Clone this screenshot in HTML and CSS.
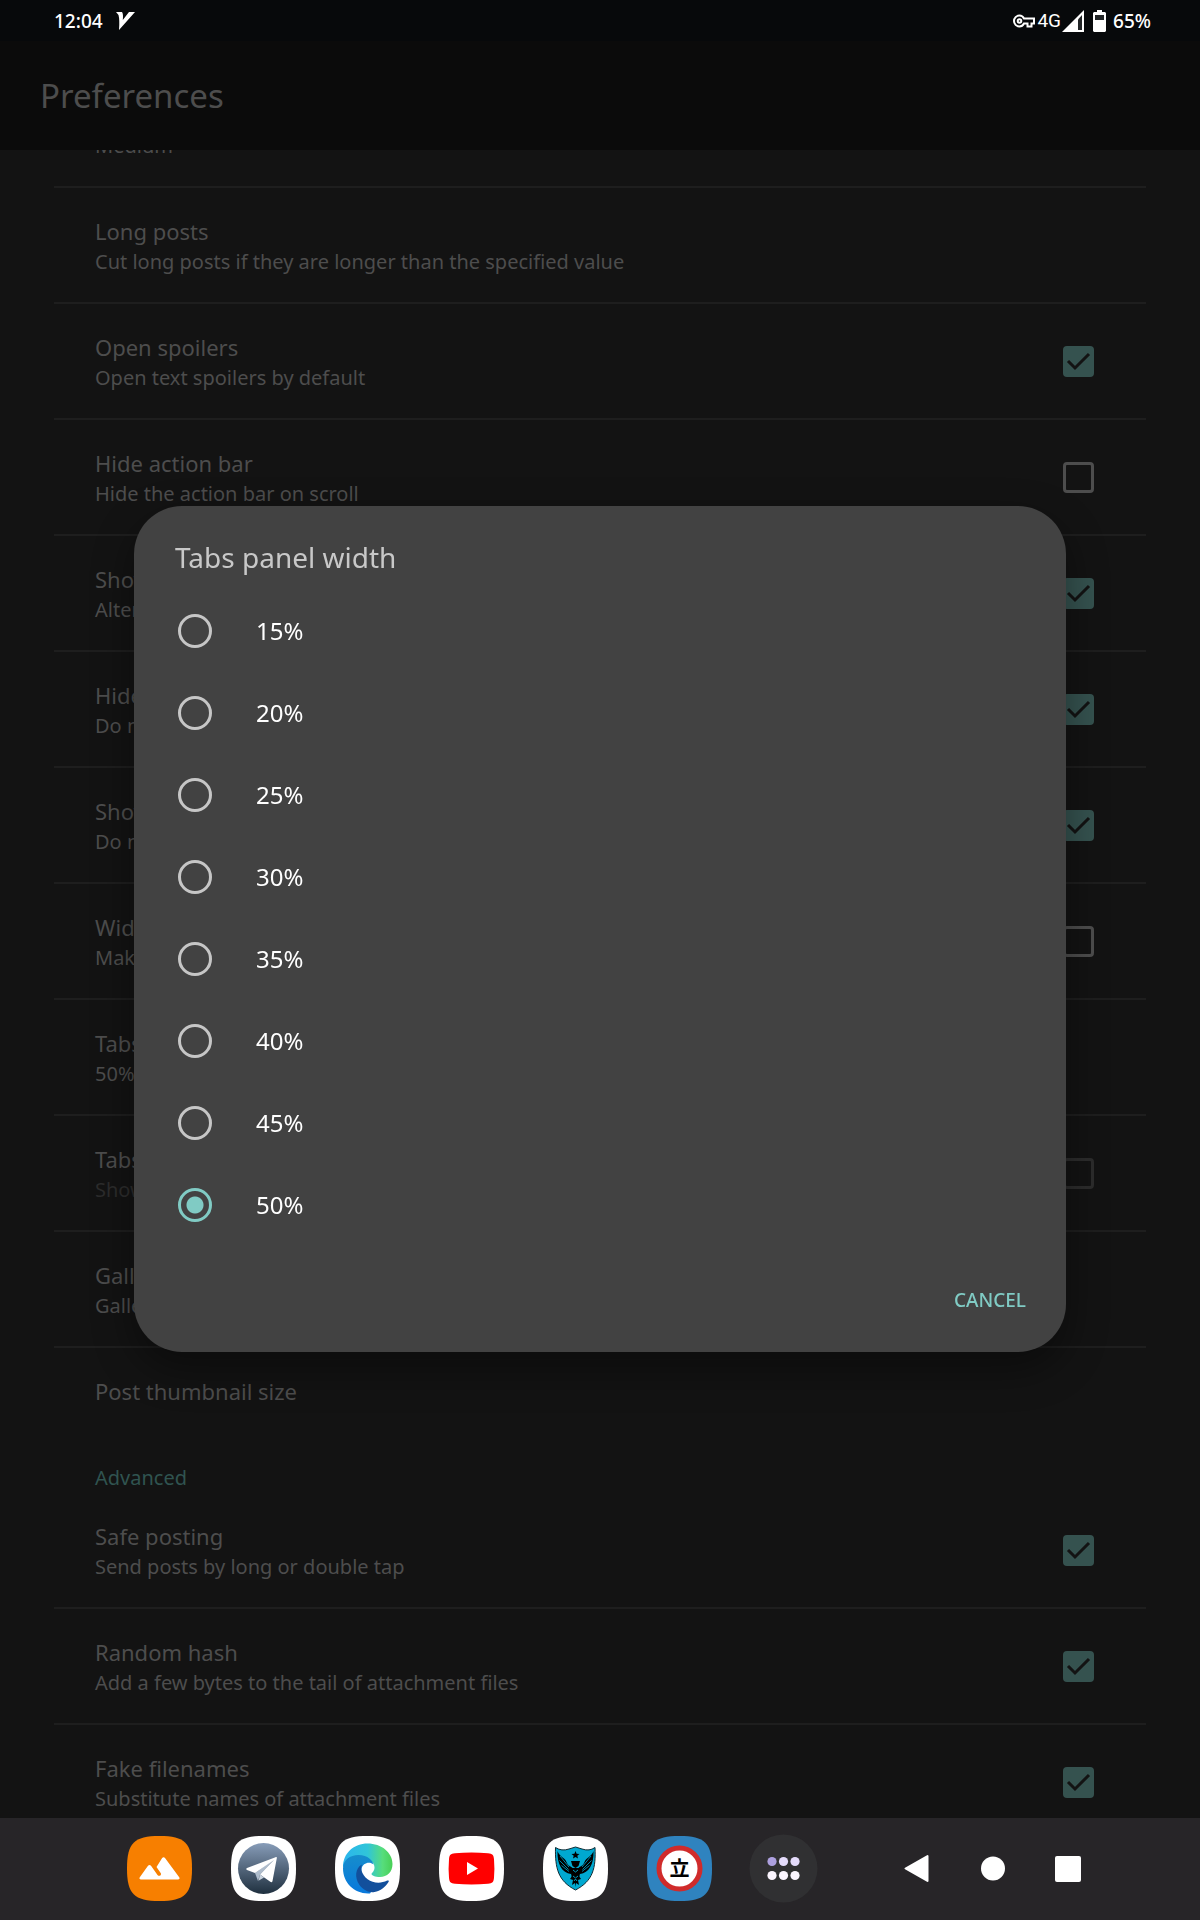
FILE: index.html
```html
<!DOCTYPE html>
<html lang="en">
  <head>
    <meta charset="UTF-8" />
    <meta name="viewport" content="width=device-width, initial-scale=1.0" />
    <title>Preferences</title>
    <link rel="stylesheet" href="styles.css">
  </head>
  <body>
    <div class="status-bar">
      <span class="clock">12:04</span>
      <svg class="notification" width="20" height="20" viewBox="0 0 20 20"><path d="M0 1h6q1.500 2 .8 8L13 1h6L3 19q.8-10-.5-15z" fill="#fff"/></svg>
      <div class="status-icons">
        <svg width="23" height="14" viewBox="0 0 23 14" fill="none" stroke="#fff" stroke-width="2"><path d="M11 4.500C10 2.500 8.500 1.500 6.500 1.500a5.500 5.500 0 0 0 0 11c2 0 3.500-1 4.500-3h3.500v3h4v-3H21v-5z"/><circle cx="6.500" cy="7" r="1.800"/></svg>
        <span class="network">4G</span>
        <svg width="22" height="22" viewBox="0 0 22 22"><path d="M0 22 22 0v22z" fill="#fff"/><path d="M16 9.500 20 5v15h-4z" fill="#222527"/></svg>
        <svg class="battery" width="13" height="22" viewBox="0 0 13 22"><path d="M4 0h5v2h3l1 1v18l-1 1H1l-1-1V3l1-1h3z" fill="#fff"/><path d="M2 5h9v5H2z" fill="#222527"/></svg>
        <span>65%</span>
      </div>
    </div>

    <header class="toolbar">
      <h1>Preferences</h1>
    </header>

    <main class="preferences">
      <div class="row">
        <div class="text">
          <div class="summary">Medium</div>
        </div>
      </div>
      <div class="row">
        <div class="text">
          <div class="title">Long posts</div>
          <div class="summary">Cut long posts if they are longer than the specified value</div>
        </div>
      </div>
      <label class="row">
        <span class="text">
          <span class="title">Open spoilers</span>
          <span class="summary">Open text spoilers by default</span>
        </span>
        <input type="checkbox" checked>
      </label>
      <label class="row">
        <span class="text">
          <span class="title">Hide action bar</span>
          <span class="summary">Hide the action bar on scroll</span>
        </span>
        <input type="checkbox">
      </label>
      <label class="row">
        <span class="text">
          <span class="title">Show</span>
          <span class="summary">Alternative</span>
        </span>
        <input type="checkbox" checked>
      </label>
      <label class="row">
        <span class="text">
          <span class="title">Hide</span>
          <span class="summary">Do not hide</span>
        </span>
        <input type="checkbox" checked>
      </label>
      <label class="row">
        <span class="text">
          <span class="title">Show</span>
          <span class="summary">Do not show</span>
        </span>
        <input type="checkbox" checked>
      </label>
      <label class="row">
        <span class="text">
          <span class="title">Wide</span>
          <span class="summary">Make wide</span>
        </span>
        <input type="checkbox">
      </label>
      <div class="row">
        <div class="text">
          <div class="title">Tabs</div>
          <div class="summary">50%</div>
        </div>
      </div>
      <label class="row disabled">
        <span class="text">
          <span class="title">Tabs</span>
          <span class="summary">Show</span>
        </span>
        <input type="checkbox" disabled>
      </label>
      <div class="row">
        <div class="text">
          <div class="title">Gallery</div>
          <div class="summary">Gallery</div>
        </div>
      </div>
      <div class="row last">
        <div class="text">
          <div class="title">Post thumbnail size</div>
        </div>
      </div>

      <h2>Advanced</h2>
      <label class="row">
        <span class="text">
          <span class="title">Safe posting</span>
          <span class="summary">Send posts by long or double tap</span>
        </span>
        <input type="checkbox" checked>
      </label>
      <label class="row">
        <span class="text">
          <span class="title">Random hash</span>
          <span class="summary">Add a few bytes to the tail of attachment files</span>
        </span>
        <input type="checkbox" checked>
      </label>
      <label class="row">
        <span class="text">
          <span class="title">Fake filenames</span>
          <span class="summary">Substitute names of attachment files</span>
        </span>
        <input type="checkbox" checked>
      </label>
    </main>

    <div class="overlay">
      <form class="dialog" role="dialog" aria-labelledby="dialog-title">
        <h2 id="dialog-title">Tabs panel width</h2>
        <label class="option"><input type="radio" name="width" value="15">15%</label>
        <label class="option"><input type="radio" name="width" value="20">20%</label>
        <label class="option"><input type="radio" name="width" value="25">25%</label>
        <label class="option"><input type="radio" name="width" value="30">30%</label>
        <label class="option"><input type="radio" name="width" value="35">35%</label>
        <label class="option"><input type="radio" name="width" value="40">40%</label>
        <label class="option"><input type="radio" name="width" value="45">45%</label>
        <label class="option"><input type="radio" name="width" value="50" checked>50%</label>
        <div class="actions">
          <button type="button" class="cancel">CANCEL</button>
        </div>
      </form>
    </div>

    <nav class="taskbar">
      <div class="apps">
        <button type="button" aria-label="Gallery">
          <svg viewBox="0 0 65 65">
            <defs><path id="tile" d="M32.500 0C58 0 65 7 65 32.500S58 65 32.500 65 0 58 0 32.500 7 0 32.500 0z"/></defs>
            <use href="#tile" fill="#f77f00"/>
            <path d="M14 43.500c-1.500 0-2-1-1.200-2.200l8.200-11.500c1-1.200 2-1.200 3 0l6.500 9.200c1.500 2 4.500.2 3.200-2l-4.200-6 5.500-8.700c1-1.500 2.200-1.500 3.200 0l14 19c.8 1.200.3 2.200-1.200 2.200z" fill="#fff"/>
          </svg>
        </button>
        <button type="button" aria-label="Telegram">
          <svg viewBox="0 0 65 65">
            <defs><linearGradient id="telegram" x1="0" y1="0" x2="0" y2="1"><stop offset="0" stop-color="#879cb8"/><stop offset="1" stop-color="#1f303f"/></linearGradient></defs>
            <use href="#tile" fill="#fff"/>
            <circle cx="32.500" cy="32.500" r="25.500" fill="url(#telegram)"/>
            <path d="M24 37 45 22 29 38.500 27 45z" fill="#aebccc"/>
            <path d="M16 32 44.500 21.200c1-.3 1.500.1 1.300 1.100L41.500 45c-.3 1.400-1.100 1.600-2.200.8L29 38.500 43 24 24 37l-8-3c-1-.6-1-1.400 0-2z" fill="#fff"/>
            <path d="m29 38.500 4 3-5.500 3.300z" fill="#c9d3de"/>
          </svg>
        </button>
        <button type="button" aria-label="Edge">
          <svg viewBox="0 0 65 65">
            <defs>
              <linearGradient id="edge-top"><stop offset="0" stop-color="#2bb5ee"/><stop offset=".5" stop-color="#30c5d8"/><stop offset=".8" stop-color="#57dd7c"/><stop offset="1" stop-color="#48cf55"/></linearGradient>
              <linearGradient id="edge-left" x1="0" y1="0" x2="0" y2="1"><stop offset="0" stop-color="#168dcc"/><stop offset="1" stop-color="#0878dc"/></linearGradient>
            </defs>
            <use href="#tile" fill="#fff"/>
            <path d="M8 31C8 17 19 7.500 32.500 7.500c14 0 25 9 25 20.500 0 8-5.500 13-12.500 13-5 0-8.500-1.500-8.500-3 0-1 3-2.500 3-6.500 0-5-4.500-8.500-10-8.500z" fill="url(#edge-top)"/>
            <path d="M8 32.500C8 24 15 19 23.500 19 33 19 38 25 38.500 28.500c-4-3.500-11-1.500-12 4.500C25 42 33 48 41 49l-6 8.400C20 58.500 8 47 8 32.500z" fill="url(#edge-left)"/>
            <path d="M27 28.500C20 32 19.500 42 24.500 49c4 5.500 10 8 15 7 6-1.200 11-5 14-10 .8-1.300 0-2-1.300-1.400C41 50 29 44 26.500 34.500c-.5-2.500-.2-4.500.5-6z" fill="#124f9c"/>
          </svg>
        </button>
        <button type="button" aria-label="YouTube">
          <svg viewBox="0 0 65 65">
            <use href="#tile" fill="#fff"/>
            <path d="M16 17.200q16.500-1.400 33 0c4.500.4 5.600 1.800 6 6q.8 9.300 0 18.600c-.4 4.200-1.500 5.600-6 6q-16.500 1.400-33 0c-4.500-.4-5.600-1.800-6-6q-.8-9.300 0-18.600c.4-4.200 1.500-5.600 6-6z" fill="#f00"/>
            <path d="m28 26 11 6.500L28 39z" fill="#fff"/>
          </svg>
        </button>
        <button type="button" aria-label="Shield">
          <svg viewBox="0 0 65 65">
            <use href="#tile" fill="#fff"/>
            <path d="M12.500 11.500q6 4 13.500 1.500l6.500-2 6.500 2q7.500 2.500 13-1.500C53 32 50 45 32.500 54 15 45 12 32 12.500 11.500z" fill="#00a9d1" stroke="#102b34"/>
            <path d="m32.500 15 1.100 2.700 2.900.2-2.200 1.900.7 2.800-2.500-1.500-2.500 1.500.7-2.800-2.200-1.900 2.900-.2z"/>
            <path d="M28 25h9l-1.500 5-3 2-3-2z"/>
            <path d="M28 38C19 37 14 28 14.500 15c2 6 7 6 9 11 1.500 4 4 4 6 6l-1 10zM37 38c9-1 14-10 13.500-23-2 6-7 6-9 11-1.500 4-4 4-6 6l1 10z"/>
            <path d="M17 20l9 11M16.500 24.500l9 9M18.500 29.500l7.500 6M20.500 18l6 11M48 20l-9 11M48.500 24.500l-9 9M46.500 29.500l-7.500 6M44.500 18l-6 11" stroke="#00a9d1" stroke-width=".8"/>
            <path d="M28 32h9l-1 8 2 3-3 1 1 5-3-2-.5 4-.5-4-3 2 1-5-3-1 2-3z"/>
            <path d="M30 34l2.500 2 2.500-2M30 40l2.500 2 2.500-2M31 45l1.500-2 1.500 2" fill="none" stroke="#00a9d1" stroke-width=".9"/>
          </svg>
        </button>
        <button type="button" aria-label="Dictionary">
          <svg viewBox="0 0 65 65">
            <use href="#tile" fill="#2f83bf"/>
            <circle cx="32.500" cy="32.500" r="20.500" fill="#fff" stroke="#d02b2b" stroke-width="5"/>
            <text class="kanji" x="32.500" y="40" text-anchor="middle">立</text>
          </svg>
        </button>
        <button type="button" aria-label="All apps">
          <svg viewBox="0 0 65 65">
            <circle cx="32.500" cy="32.500" r="34" fill="#303032"/>
            <circle cx="21" cy="25.500" r="4.600" fill="#ada0df"/>
            <g fill="#e4dbfb"><circle cx="32.500" cy="25.500" r="4.600"/><circle cx="44" cy="25.500" r="4.600"/></g>
            <g fill="#fbf5ff"><circle cx="21" cy="39.500" r="4.600"/><circle cx="32.500" cy="39.500" r="4.600"/><circle cx="44" cy="39.500" r="4.600"/></g>
          </svg>
        </button>
      </div>
      <div class="keys">
        <button type="button" aria-label="Back"><svg viewBox="0 0 40 40"><path d="M8.500 20.500 30.500 8v25z" fill="#fff" stroke="#fff" stroke-width="2" stroke-linejoin="round"/></svg></button>
        <button type="button" aria-label="Home"><svg viewBox="0 0 40 40"><circle cx="20" cy="20.500" r="12" fill="#fff"/></svg></button>
        <button type="button" aria-label="Recents"><svg viewBox="0 0 40 40"><rect x="6" y="8" width="26" height="26" rx="2" fill="#fff"/></svg></button>
      </div>
    </nav>
  </body>
</html>
```
FILE: styles.css
```css
* {
  box-sizing: border-box;
}
body {
  display: flex;
  flex-direction: column;
  height: 100vh;
  margin: 0;
  overflow: hidden;
  background-color: #131313;
  color: #4d4d4d;
  font-family: "Noto Sans", "Noto Sans CJK JP", sans-serif;
}
h1, h2 {
  margin: 0;
  font-weight: 400;
}
button {
  padding: 0;
  border: none;
  background: none;
  font-family: inherit;
  cursor: pointer;
}
svg {
  display: block;
  overflow: visible;
}

/* status bar and toolbar stay above the scrolled list */
.status-bar {
  position: relative;
  z-index: 1;
  display: flex;
  flex-shrink: 0;
  align-items: center;
  gap: 13px;
  height: 41px;
  padding: 0 49px 0 54px;
  background-color: #07090b;
  color: #fff;
  font-size: 19px;
  font-weight: 500;
}
.status-icons {
  display: flex;
  align-items: center;
  gap: 1px;
  margin-left: auto;
}
.battery {
  margin: 0 6px 0 8px;
}
.network {
  font-family: Roboto, sans-serif;
  font-weight: 400;
}
.toolbar {
  position: relative;
  z-index: 1;
  display: flex;
  flex-shrink: 0;
  align-items: center;
  height: 109px;
  padding: 0 40px;
  background-color: #0b0b0b;
}
.toolbar h1 {
  font-size: 33px;
}

/* preference list, scrolled partly under the toolbar */
.preferences {
  flex: 1;
  min-height: 0;
  margin-top: -50px;
  padding: 0 54px;
}
.row {
  display: flex;
  align-items: center;
  justify-content: space-between;
  padding: 0 52px 0 41px;
  border-bottom: 2px solid #1e1e1e;
}
.text {
  padding: 29px 0 23px;
}
.title, .summary {
  display: block;
}
.title {
  font-size: 22px;
  line-height: 28px;
}
.summary {
  font-size: 20px;
  line-height: 34px;
}
.last {
  border-bottom: none;
}
.disabled .summary {
  color: #2c2c2c;
}
.preferences h2 {
  padding: 38px 41px 3px;
  color: #305450;
  font-size: 20px;
  line-height: 24px;
}
input {
  flex-shrink: 0;
  margin: 0;
  appearance: none;
}
input[type="checkbox"] {
  width: 31px;
  height: 31px;
  border: 3px solid #4d4d4d;
  border-radius: 4px;
}
input[type="checkbox"]:checked {
  border: none;
  background: #35524f url("data:image/svg+xml,%3Csvg xmlns='http://www.w3.org/2000/svg' viewBox='0 0 31 31'%3E%3Cpath d='M5 15l7 7L26 8' fill='none' stroke='%23131313' stroke-width='3'/%3E%3C/svg%3E");
}
input[type="checkbox"]:disabled {
  border-color: #2c2c2c;
}

/* dialog */
.overlay {
  position: fixed;
  inset: 41px 0 104px;
  display: flex;
  align-items: center;
  padding: 0 134px;
}
.dialog {
  flex: 1;
  border-radius: 48px;
  background-color: #424242;
  box-shadow: 0 16px 40px rgba(0, 0, 0, 0.4);
  color: #fff;
}
.dialog h2 {
  padding: 31px 41px 13px;
  color: #c8c8c8;
  font-size: 28px;
  line-height: 40px;
}
.option {
  display: flex;
  align-items: center;
  gap: 44px;
  height: 82px;
  padding: 0 44px;
  font-size: 24px;
}
input[type="radio"] {
  width: 34px;
  height: 34px;
  border: 3px solid #c6c6c6;
  border-radius: 50%;
}
input[type="radio"]:checked {
  border-color: #80cbc4;
  background: radial-gradient(circle, #80cbc4 8px, transparent 9px);
}
.actions {
  display: flex;
  justify-content: flex-end;
  padding: 34px 40px 32px;
}
.cancel {
  color: #80cbc4;
  font-size: 19px;
  font-weight: 500;
  line-height: 40px;
}

/* taskbar */
.taskbar {
  position: fixed;
  inset: auto 0 0;
  display: flex;
  align-items: center;
  justify-content: space-between;
  height: 102px;
  padding: 0 111px 2px 127px;
  background-color: #272528;
}
.apps, .keys {
  display: flex;
  gap: 39px;
}
.keys {
  gap: 36px;
}
.apps svg {
  width: 65px;
  height: 65px;
}
.keys svg {
  width: 40px;
  height: 40px;
}
.kanji {
  font-family: "Noto Sans CJK JP", sans-serif;
  font-size: 20px;
  font-weight: 700;
}
```
